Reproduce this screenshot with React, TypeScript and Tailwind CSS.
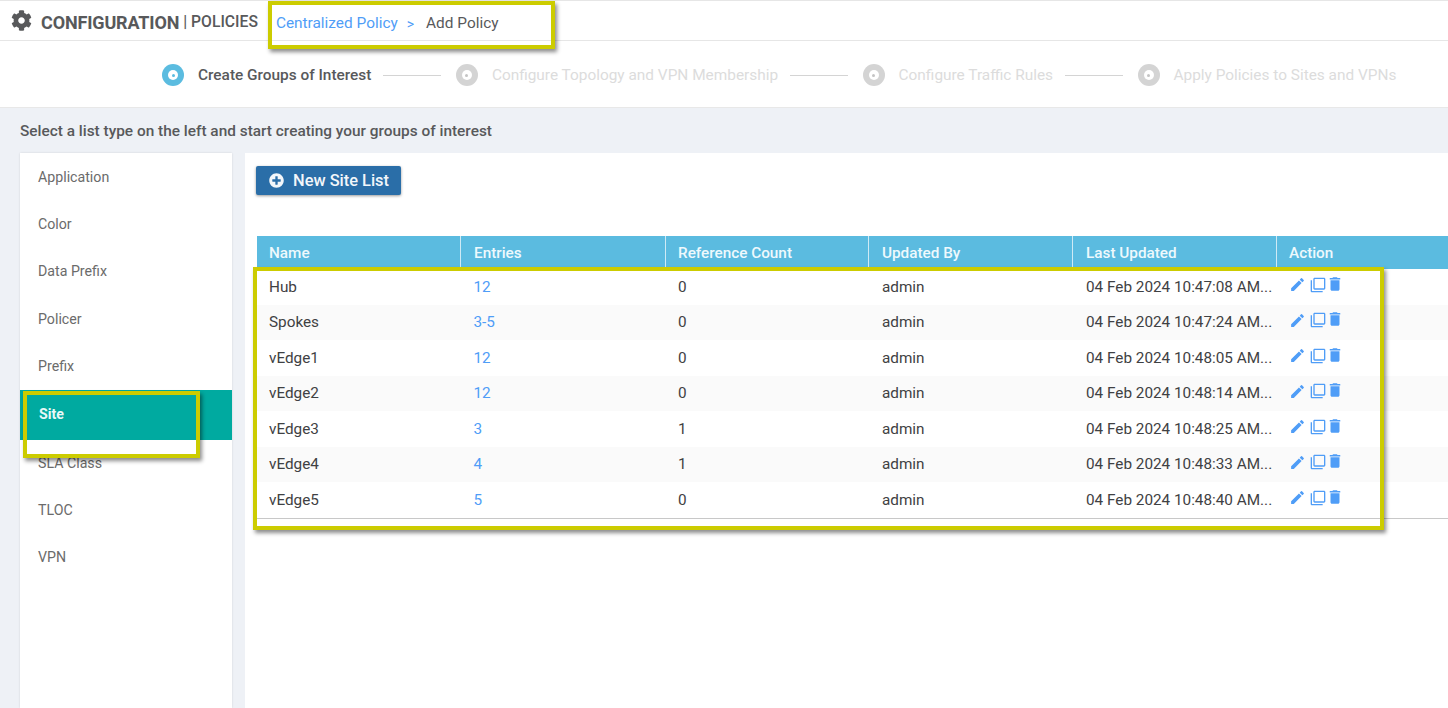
import { FaCog, FaPlusCircle } from "react-icons/fa";
import { MdEdit, MdFilterNone, MdDelete } from "react-icons/md";

const lists = ["Application", "Color", "Data Prefix", "Policer", "Prefix", "Site", "SLA Class", "TLOC", "VPN"];

const steps = [
  { label: "Create Groups of Interest", active: true, line: true },
  { label: "Configure Topology and VPN Membership", active: false, line: true },
  { label: "Configure Traffic Rules", active: false, line: true },
  { label: "Apply Policies to Sites and VPNs", active: false, line: false },
];

const columns = [
  { name: "Name", width: "w-[204px] pl-[12px]" },
  { name: "Entries", width: "w-[205px] pl-[13px]" },
  { name: "Reference Count", width: "w-[203px] pl-[12px]" },
  { name: "Updated By", width: "w-[204px] pl-[13px]" },
  { name: "Last Updated", width: "w-[204px] pl-[13px]" },
  { name: "Action", width: "flex-1 pl-[12px]" },
];

const rows = [
  ["Hub", "12", "0", "admin", "04 Feb 2024 10:47:08 AM..."],
  ["Spokes", "3-5", "0", "admin", "04 Feb 2024 10:47:24 AM..."],
  ["vEdge1", "12", "0", "admin", "04 Feb 2024 10:48:05 AM..."],
  ["vEdge2", "12", "0", "admin", "04 Feb 2024 10:48:14 AM..."],
  ["vEdge3", "3", "1", "admin", "04 Feb 2024 10:48:25 AM..."],
  ["vEdge4", "4", "1", "admin", "04 Feb 2024 10:48:33 AM..."],
  ["vEdge5", "5", "0", "admin", "04 Feb 2024 10:48:40 AM..."],
];

function Highlight({ className }: { className: string }) {
  return <div className={`absolute border-[4px] border-[#cccc00] shadow-[2px_3px_4px_rgba(0,0,0,0.45)] ${className}`} />;
}

function Header() {
  return (
    <header className="flex h-[41px] items-center border-y border-y-[#e6e6e6] bg-white pl-[11px] pt-[3px]">
      <FaCog className="mb-[4px] text-[21px] text-[#58595b]" />
      <span className="ml-[9px] text-[18px] font-bold tracking-[-0.15px] text-[#58595b]">CONFIGURATION</span>
      <span className="ml-[4px] text-[15.7px] font-medium text-[#58595b]">| POLICIES</span>
      <span className="ml-[18px] mt-[4px] text-[15.4px] text-[#4f9df7]">Centralized Policy</span>
      <span className="ml-[9px] mt-[4px] text-[14px] text-[#4f9df7]">&gt;</span>
      <span className="ml-[12px] mt-[4px] text-[15.4px] text-[#58595b]">Add Policy</span>
    </header>
  );
}

function Stepper() {
  return (
    <div className="flex h-[67px] items-center border-b border-b-[#e8e8e8] bg-white pl-[162px] pt-[3px]">
      {steps.map((step) => (
        <div key={step.label} className="flex items-center">
          <div className={`flex h-[22px] w-[22px] items-center justify-center rounded-full ${step.active ? "bg-[#5bbce0]" : "bg-[#d4d4d4]"}`}>
            <div className="flex h-[10px] w-[10px] items-center justify-center rounded-full bg-white">
              <div className={`h-[3px] w-[3px] rounded-full ${step.active ? "bg-[#5bbce0]" : "bg-[#c4c4c4]"}`} />
            </div>
          </div>
          <span className={`ml-[14px] text-[15.4px] ${step.active ? "font-medium text-[#58595b]" : "text-[#dcdcdc]"}`}>{step.label}</span>
          {step.line && <div className="ml-[12px] mr-[14.5px] h-px w-[58px] bg-[#d4d4d4]" />}
        </div>
      ))}
    </div>
  );
}

function Sidebar() {
  return (
    <aside className="flex w-[212px] flex-col bg-white pt-px shadow-[0_0_2px_rgba(0,0,0,0.12)]">
      {lists.map((item) =>
        item === "Site" ? (
          <div key={item} className="flex h-[50px] items-center bg-[#00aaa0] pl-[19px] text-[14.2px] font-bold text-[#e8f8f7]">
            {item}
          </div>
        ) : (
          <div key={item} className="flex h-[47.2px] items-center pl-[18px] text-[14.2px] text-[#6b6b6b]">
            {item}
          </div>
        ),
      )}
    </aside>
  );
}

function SiteTable() {
  return (
    <div className="ml-[12px] mt-[41px] text-[15.3px]">
      <div className="flex h-[33px] bg-[#5bbbe0] font-medium text-[#eef9fd]">
        {columns.map((col) => (
          <div key={col.name} className={`flex items-center border-r border-r-[#cfeaf5] pt-[2px] last:border-r-0 ${col.width}`}>
            {col.name}
          </div>
        ))}
      </div>
      <div className="border-b border-b-[#c8c8c8]">
        {rows.map((row) => (
          <div key={row[0]} className="flex h-[35.5px] items-center pt-[1px] text-[#3f4143] even:bg-[#fafafa]">
            <div className="w-[204px] pl-[12px]">{row[0]}</div>
            <div className="w-[205px] pl-[12.5px] text-[#4f9df7]">{row[1]}</div>
            <div className="w-[203px] pl-[12px]">{row[2]}</div>
            <div className="w-[204px] pl-[13px]">{row[3]}</div>
            <div className="w-[204px] pl-[13px]">{row[4]}</div>
            <div className="mb-[5px] flex flex-1 items-center pl-[12px] text-[#4f9df7]">
              <MdEdit className="text-[17px]" />
              <MdFilterNone className="ml-[4px] text-[16px]" />
              <MdDelete className="mb-[2px] text-[18px]" />
            </div>
          </div>
        ))}
      </div>
    </div>
  );
}

export default function App() {
  return (
    <div className="relative flex h-[708px] w-[1448px] flex-col overflow-hidden bg-[#eef1f6] font-['Roboto',sans-serif]">
      <Header />
      <Stepper />
      <div className="flex h-[45px] items-center pl-[20px] pt-[2px] text-[15.4px] font-medium text-[#58595b]">
        Select a list type on the left and start creating your groups of interest
      </div>
      <div className="flex flex-1 pl-[20px]">
        <Sidebar />
        <main className="ml-[13px] flex-1 bg-white">
          <button className="ml-[11px] mt-[13px] flex h-[29px] w-[145px] items-center gap-[9px] rounded-[2px] bg-[#2a6ea8] pl-[13px] pt-px text-[16.4px] font-medium text-[#f2f6fa] shadow-[0_1px_3px_rgba(0,0,0,0.4)]">
            <FaPlusCircle className="mb-[2px] text-[15px]" />
            New Site List
          </button>
          <SiteTable />
        </main>
      </div>
      <Highlight className="left-[268px] top-[1px] h-[48px] w-[287px]" />
      <Highlight className="left-[23px] top-[391px] h-[67px] w-[177px]" />
      <Highlight className="left-[253px] top-[267px] h-[263px] w-[1131px]" />
    </div>
  );
}
